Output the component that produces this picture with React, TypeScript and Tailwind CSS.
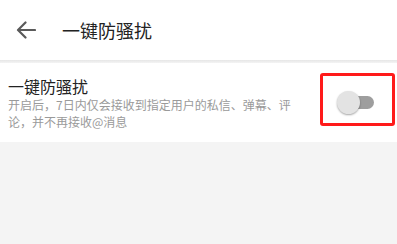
import React from "react";

export default function App() {
  return (
    <div
      className="w-[397px] h-[244px] bg-[#f4f4f4] overflow-hidden flex flex-col"
      style={{ fontFamily: '"Noto Sans CJK SC", "Noto Sans", sans-serif' }}
    >
      <div className="h-[60px] bg-white flex items-center shrink-0">
        <div className="w-[62px] flex items-center pl-[16px]">
          <svg width="20" height="18" viewBox="0 0 20 18" fill="none">
            <path d="M19 9H2.5M9.5 1.5L2 9l7.5 7.5" stroke="#5a5a5a" strokeWidth="2.2" strokeLinecap="round" strokeLinejoin="round" />
          </svg>
        </div>
        <span className="text-[18px] leading-none text-[#222]">一键防骚扰</span>
      </div>
      <div className="h-[3px] bg-gradient-to-b from-[#e6e6e6] to-[#f4f4f4] shrink-0" />
      <div className="h-[79px] bg-white flex items-center shrink-0">
        <div className="pl-[8px] w-[312px] flex flex-col">
          <span className="text-[16px] leading-[20px] text-[#222]">一键防骚扰</span>
          <span className="text-[12px] leading-[17px] text-[#9a9a9a]">
            开启后，7日内仅会接收到指定用户的私信、弹幕、评论，并不再接收@消息
          </span>
        </div>
        <div className="self-start mt-[10px] ml-[8px] w-[75px] h-[53px] border-[3px] border-[#ff1a1a] rounded-[3px] pl-[14px] pt-[15px]">
          <div className="relative w-[37px] h-[23px]">
            <div className="absolute left-[13px] top-[5px] w-[24px] h-[13px] rounded-full bg-[#9e9e9e]" />
            <div className="absolute left-0 top-0 w-[23px] h-[23px] rounded-full bg-[#e3e3e3] shadow-[0_1px_2px_rgba(0,0,0,0.35)]" />
          </div>
        </div>
      </div>
    </div>
  );
}
